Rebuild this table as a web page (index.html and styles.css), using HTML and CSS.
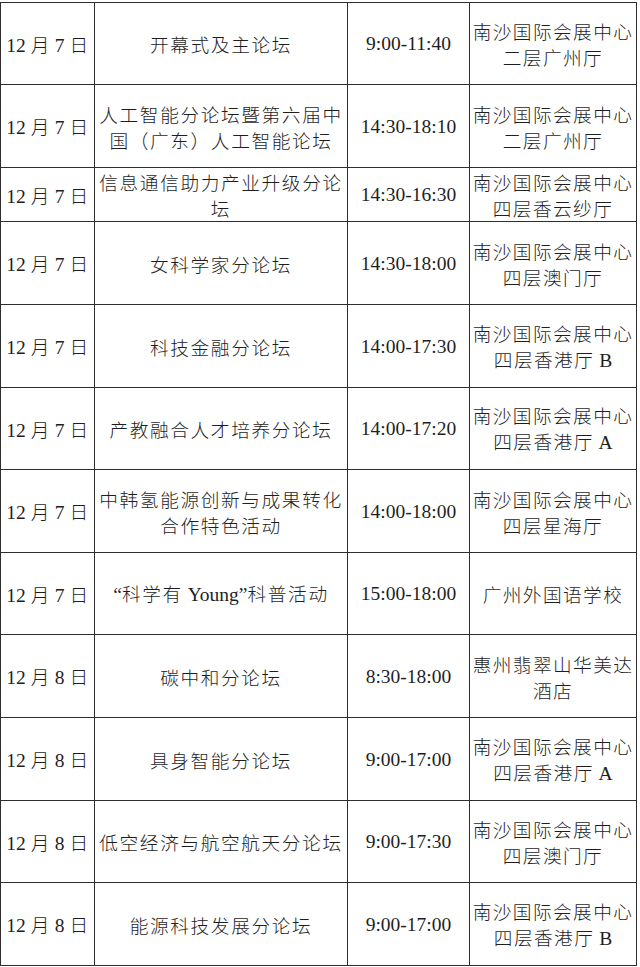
FILE: index.html
```html
<!DOCTYPE html>
<html>
<head>
<meta charset="utf-8">
<title>日程表</title>
<link rel="stylesheet" href="styles.css">
</head>
<body>
<div class="schedule">
  <div class="row r82">
    <div class="cell date"><p><span class="num">12 </span>月<span class="num"> 7 </span>日</p></div>
    <div class="cell name"><p>开幕式及主论坛</p></div>
    <div class="cell time"><p>9:00-11:40</p></div>
    <div class="cell place"><p>南沙国际会展中心<br>二层广州厅</p></div>
  </div>
  <div class="row r83">
    <div class="cell date"><p><span class="num">12 </span>月<span class="num"> 7 </span>日</p></div>
    <div class="cell name"><p>人工智能分论坛暨第六届中<br>国（广东）人工智能论坛</p></div>
    <div class="cell time"><p>14:30-18:10</p></div>
    <div class="cell place"><p>南沙国际会展中心<br>二层广州厅</p></div>
  </div>
  <div class="row r54">
    <div class="cell date"><p><span class="num">12 </span>月<span class="num"> 7 </span>日</p></div>
    <div class="cell name"><p>信息通信助力产业升级分论<br>坛</p></div>
    <div class="cell time"><p>14:30-16:30</p></div>
    <div class="cell place"><p>南沙国际会展中心<br>四层香云纱厅</p></div>
  </div>
  <div class="row r83">
    <div class="cell date"><p><span class="num">12 </span>月<span class="num"> 7 </span>日</p></div>
    <div class="cell name"><p>女科学家分论坛</p></div>
    <div class="cell time"><p>14:30-18:00</p></div>
    <div class="cell place"><p>南沙国际会展中心<br>四层澳门厅</p></div>
  </div>
  <div class="row r83">
    <div class="cell date"><p><span class="num">12 </span>月<span class="num"> 7 </span>日</p></div>
    <div class="cell name"><p>科技金融分论坛</p></div>
    <div class="cell time"><p>14:00-17:30</p></div>
    <div class="cell place"><p>南沙国际会展中心<br>四层香港厅<span class="num"> B</span></p></div>
  </div>
  <div class="row r82">
    <div class="cell date"><p><span class="num">12 </span>月<span class="num"> 7 </span>日</p></div>
    <div class="cell name"><p>产教融合人才培养分论坛</p></div>
    <div class="cell time"><p>14:00-17:20</p></div>
    <div class="cell place"><p>南沙国际会展中心<br>四层香港厅<span class="num"> A</span></p></div>
  </div>
  <div class="row r83">
    <div class="cell date"><p><span class="num">12 </span>月<span class="num"> 7 </span>日</p></div>
    <div class="cell name"><p>中韩氢能源创新与成果转化<br>合作特色活动</p></div>
    <div class="cell time"><p>14:00-18:00</p></div>
    <div class="cell place"><p>南沙国际会展中心<br>四层星海厅</p></div>
  </div>
  <div class="row r82">
    <div class="cell date"><p><span class="num">12 </span>月<span class="num"> 7 </span>日</p></div>
    <div class="cell name"><p><span class="num">“</span>科学有<span class="num"> Young”</span>科普活动</p></div>
    <div class="cell time"><p>15:00-18:00</p></div>
    <div class="cell place"><p>广州外国语学校</p></div>
  </div>
  <div class="row r83">
    <div class="cell date"><p><span class="num">12 </span>月<span class="num"> 8 </span>日</p></div>
    <div class="cell name"><p>碳中和分论坛</p></div>
    <div class="cell time"><p>8:30-18:00</p></div>
    <div class="cell place"><p>惠州翡翠山华美达<br>酒店</p></div>
  </div>
  <div class="row r83">
    <div class="cell date"><p><span class="num">12 </span>月<span class="num"> 8 </span>日</p></div>
    <div class="cell name"><p>具身智能分论坛</p></div>
    <div class="cell time"><p>9:00-17:00</p></div>
    <div class="cell place"><p>南沙国际会展中心<br>四层香港厅<span class="num"> A</span></p></div>
  </div>
  <div class="row r82">
    <div class="cell date"><p><span class="num">12 </span>月<span class="num"> 8 </span>日</p></div>
    <div class="cell name"><p>低空经济与航空航天分论坛</p></div>
    <div class="cell time"><p>9:00-17:30</p></div>
    <div class="cell place"><p>南沙国际会展中心<br>四层澳门厅</p></div>
  </div>
  <div class="row r83">
    <div class="cell date"><p><span class="num">12 </span>月<span class="num"> 8 </span>日</p></div>
    <div class="cell name"><p>能源科技发展分论坛</p></div>
    <div class="cell time"><p>9:00-17:00</p></div>
    <div class="cell place"><p>南沙国际会展中心<br>四层香港厅<span class="num"> B</span></p></div>
  </div>
</div>
</body>
</html>
```

FILE: styles.css
```css
html, body {
  margin: 0;
  padding: 0;
  background: #ffffff;
}

body {
  font-family: "Noto Sans CJK SC", sans-serif;
  font-size: 18.7px;
  color: #1e1e1e;
}

.schedule {
  margin-top: 2px;
  width: 637px;
  box-sizing: border-box;
  border-top: 1px solid #2e2e2e;
  border-left: 1px solid #2e2e2e;
}

.row {
  display: grid;
  grid-template-columns: 94px 253px 122px 167px;
}

.r82 { height: 82px; }
.r83 { height: 83px; }
.r54 { height: 54px; }

.cell {
  box-sizing: border-box;
  border-right: 1px solid #2e2e2e;
  border-bottom: 1px solid #2e2e2e;
  display: flex;
  align-items: center;
  justify-content: center;
  font-weight: 300;
}

.cell p {
  margin: 0;
  text-align: center;
  line-height: 26px;
  white-space: pre;
}

.num,
.time p {
  font-family: "Liberation Serif", "Times New Roman", serif;
  font-weight: 400;
  letter-spacing: 0;
  font-size: 19.5px;
}

.date p {
  letter-spacing: 0.6px;
  padding-top: 2px;
}

.name p {
  letter-spacing: 1.6px;
  padding-top: 1px;
}

.time p {
  padding-top: 1px;
}

.place p {
  letter-spacing: 1.4px;
  padding-top: 1px;
}
```
